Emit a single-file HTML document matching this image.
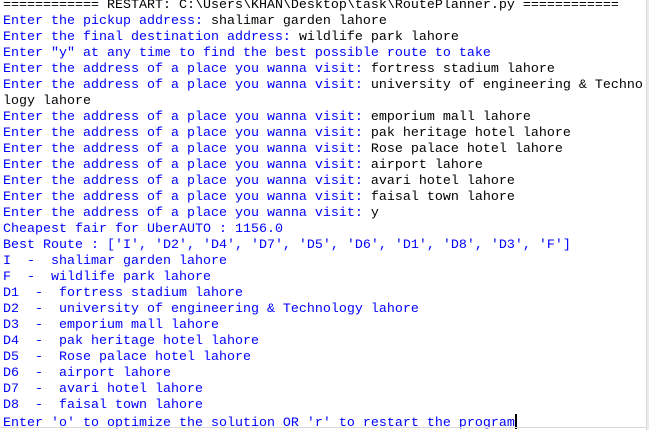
<!DOCTYPE html>
<html><head><style>
html,body{margin:0;padding:0;background:#fff;width:649px;height:430px;overflow:hidden}
pre{margin:0;position:absolute;left:3px;top:-2px;font-family:"Liberation Mono",monospace;font-size:13.33px;line-height:16px;color:#000;font-weight:normal}
.b{color:#0000ff}
.sb{position:absolute;left:646px;top:0;width:3px;height:430px;background:#ececec;border-left:1px solid #d8d8d8}
.bt{position:absolute;left:0;top:427px;width:646px;height:1px;background:#d8d8d8}
.cur{display:inline-block;width:2px;height:15px;background:#000;vertical-align:-3px}
</style></head><body>
<pre>============ RESTART: C:\Users\KHAN\Desktop\task\RoutePlanner.py ============
<span class="b">Enter the pickup address: </span>shalimar garden lahore
<span class="b">Enter the final destination address: </span>wildlife park lahore
<span class="b">Enter "y" at any time to find the best possible route to take</span>
<span class="b">Enter the address of a place you wanna visit: </span>fortress stadium lahore
<span class="b">Enter the address of a place you wanna visit: </span>university of engineering &amp; Techno
logy lahore
<span class="b">Enter the address of a place you wanna visit: </span>emporium mall lahore
<span class="b">Enter the address of a place you wanna visit: </span>pak heritage hotel lahore
<span class="b">Enter the address of a place you wanna visit: </span>Rose palace hotel lahore
<span class="b">Enter the address of a place you wanna visit: </span>airport lahore
<span class="b">Enter the address of a place you wanna visit: </span>avari hotel lahore
<span class="b">Enter the address of a place you wanna visit: </span>faisal town lahore
<span class="b">Enter the address of a place you wanna visit: </span>y
<span class="b">Cheapest fair for UberAUTO : 1156.0
Best Route : ['I', 'D2', 'D4', 'D7', 'D5', 'D6', 'D1', 'D8', 'D3', 'F']
I  -  shalimar garden lahore
F  -  wildlife park lahore
D1  -  fortress stadium lahore
D2  -  university of engineering &amp; Technology lahore
D3  -  emporium mall lahore
D4  -  pak heritage hotel lahore
D5  -  Rose palace hotel lahore
D6  -  airport lahore
D7  -  avari hotel lahore
D8  -  faisal town lahore
Enter 'o' to optimize the solution OR 'r' to restart the program</span><span class="cur"></span></pre>
<div class="sb"></div><div class="bt"></div>
</body></html>
